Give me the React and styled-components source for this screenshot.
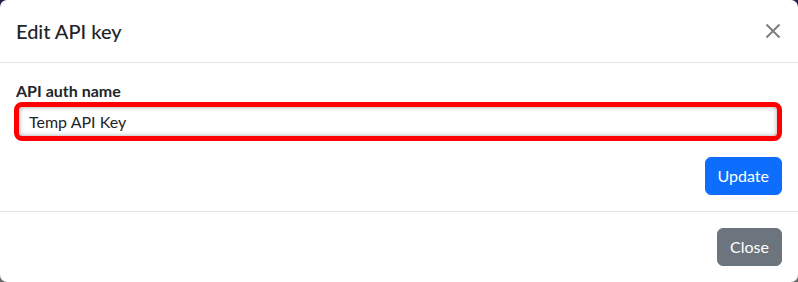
import React from "react";
import styled, { createGlobalStyle } from "styled-components";

const GlobalStyle = createGlobalStyle`
    html, body {
        margin: 0;
        padding: 0;
    }
    body {
        width: 798px;
        height: 282px;
        overflow: hidden;
        background: linear-gradient(#2b1a4d 0 50%, #6a6a6a 50% 100%);
        font-family: Lato, "Open Sans", "Liberation Sans", sans-serif;
        color: #212529;
    }
`

const Modal = styled.div`
    width: 798px;
    height: 282px;
    box-sizing: border-box;
    background: #fff;
    border-radius: 7px;
    display: flex;
    flex-direction: column;
`

const Header = styled.div`
    display: flex;
    align-items: center;
    justify-content: space-between;
    padding: 16px;
    border-bottom: 1px solid #dee2e6;
`

const Title = styled.h5`
    margin: 0;
    font-size: 20px;
    font-weight: 500;
    line-height: 30px;
`

const CloseX = styled.button`
    width: 16px;
    height: 16px;
    padding: 0;
    margin-right: 1px;
    border: 0;
    background: transparent;
    opacity: 0.5;
    display: flex;
    align-items: center;
    justify-content: center;
    cursor: pointer;
`

const Body = styled.div`
    padding: 16px;
    display: flex;
    flex-direction: column;
    border-bottom: 1px solid #dee2e6;
`

const Label = styled.label`
    display: block;
    font-size: 16px;
    font-weight: 700;
    line-height: 23px;
`

const Input = styled.input`
    box-sizing: border-box;
    margin: 0 0 0 -2px;
    width: calc(100% + 2px);
    height: 39px;
    padding: 0 10px;
    border: 5px solid #ff0000;
    border-radius: 8px;
    box-shadow: inset 0 0 5px rgba(0, 0, 0, 0.35);
    font-family: inherit;
    font-size: 16px;
    color: #212529;
    outline: none;
`

const Actions = styled.div`
    display: flex;
    justify-content: flex-end;
    margin-top: 16px;
`

const Footer = styled.div`
    display: flex;
    justify-content: flex-end;
    padding: 12px;
`

const Button = styled.button`
    height: 38px;
    padding: 0 12px;
    margin: ${(p) => (p.footer ? "4px" : "0")};
    border: 1px solid ${(p) => p.bg};
    border-radius: 6px;
    background: ${(p) => p.bg};
    color: #fff;
    font-family: inherit;
    font-size: 16px;
    line-height: 24px;
    cursor: pointer;
`

export default function App() {
    return (
        <>
            <GlobalStyle />
            <Modal>
                <Header>
                    <Title>Edit API key</Title>
                    <CloseX aria-label="Close">
                        <svg width="16" height="16" viewBox="0 0 16 16">
                            <path d="M1.5 1.5 L14.5 14.5 M14.5 1.5 L1.5 14.5" stroke="#000" strokeWidth="2" />
                        </svg>
                    </CloseX>
                </Header>
                <Body>
                    <Label htmlFor="auth-name">API auth name</Label>
                    <Input id="auth-name" defaultValue="Temp API Key" />
                    <Actions>
                        <Button bg="#0d6efd">Update</Button>
                    </Actions>
                </Body>
                <Footer>
                    <Button footer bg="#6c757d">Close</Button>
                </Footer>
            </Modal>
        </>
    );
}
